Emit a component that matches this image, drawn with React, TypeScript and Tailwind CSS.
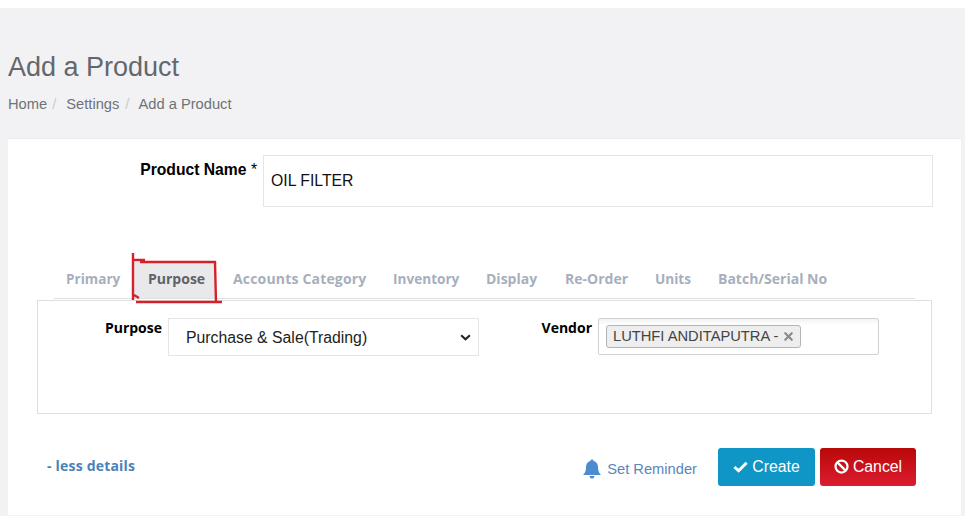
import { X } from 'lucide-react';

const arial = 'font-["Liberation_Sans",Arial,sans-serif]';
const tabFont = 'font-["Open_Sans",sans-serif]';

const tabs = [
  { name: 'Primary', cls: 'w-[76px] pl-[8px] text-[#a7afbd] text-[13.6px]' },
  { name: 'Purpose', cls: 'w-[81px] mr-[10px] pl-[14px] bg-[#e9e9eb] text-[#5f6266] text-[14px]' },
  { name: 'Accounts Category', cls: 'w-[160px] pl-[8px] text-[#a7afbd] text-[14px] tracking-[0.18px]' },
  { name: 'Inventory', cls: 'w-[93px] pl-[8px] text-[#a7afbd] text-[13.6px]' },
  { name: 'Display', cls: 'w-[79px] pl-[8px] text-[#a7afbd] text-[14px]' },
  { name: 'Re-Order', cls: 'w-[90px] pl-[8px] text-[#a7afbd] text-[14px]' },
  { name: 'Units', cls: 'w-[63px] pl-[8px] text-[#a7afbd] text-[13.6px]' },
  { name: 'Batch/Serial No', cls: 'pl-[8px] text-[#a7afbd] text-[14px]' },
];

function CheckIcon() {
  return (
    <svg viewBox="0 0 16 12" className="h-[12px] w-[15px]" fill="none" stroke="#fff" strokeWidth="3.2">
      <path d="M1.5 6 6 10 14.5 1.5" />
    </svg>
  );
}

function BanIcon() {
  return (
    <svg viewBox="0 0 16 16" className="h-[15px] w-[15px]" fill="none" stroke="#fff" strokeWidth="2.4">
      <circle cx="8" cy="8" r="6.4" />
      <path d="M3.6 3.6 12.4 12.4" />
    </svg>
  );
}

function BellIcon() {
  return (
    <svg viewBox="0 0 18 20" className="mr-[6px] h-[20px] w-[18px]" fill="#4b8dcf">
      <path d="M9 .5c1 0 1.6.7 1.6 1.6C13.5 2.8 15 5.2 15 8c0 4 1 6 3 8H0c2-2 3-4 3-8 0-2.8 1.5-5.2 4.4-5.9C7.4 1.2 8 .5 9 .5z" />
      <path d="M6.5 17h5c0 1.5-1.1 2.6-2.5 2.6S6.5 18.5 6.5 17z" />
    </svg>
  );
}

export default function App() {
  return (
    <div className={`h-[516px] w-[965px] overflow-hidden bg-white pt-2 ${arial}`}>
      <div className="h-[508px] bg-[#f2f2f4] pl-2 pr-1">
        <h1 className="pt-[42px] text-[27px] leading-[34px] text-[#64676c]">Add a Product</h1>
        <div className="mt-[11px] flex h-[18px] items-center text-[14.7px] text-[#6f7276]">
          <span>Home</span>
          <span className="ml-[5px] mr-[10px] text-[#c9cacc]">/</span>
          <span>Settings</span>
          <span className="ml-[6px] mr-[9px] text-[#c9cacc]">/</span>
          <span>Add a Product</span>
        </div>

        <div className="relative mt-[25px] h-[377px] border-t border-[#ebebee] bg-white">
          <div className="flex pt-[16px]">
            <label className="w-[255px] pt-[5px] pr-[6px] text-right text-[15.7px] leading-[20px] font-bold text-black">
              Product Name <span className="font-normal">*</span>
            </label>
            <div className="flex h-[52px] w-[670px] items-center border border-[#e5e5e7] pl-[7px] text-[15.8px] text-[#111]">
              OIL FILTER
            </div>
          </div>

          <div className="mt-[51px] ml-[46px] flex h-[41px] w-[861px] border-b border-[#dfe0e3] pl-[4px]">
            {tabs.map((t) => (
              <div
                key={t.name}
                className={`mt-[4px] h-[36px] pt-[7px] leading-[20px] font-bold whitespace-nowrap ${tabFont} ${t.cls}`}
              >
                {t.name}
              </div>
            ))}
          </div>

          <div className="mt-[1px] ml-[29px] flex h-[114px] w-[895px] border border-[#dfdfe2] pt-[17px]">
            <label className={`w-[130px] pr-[6px] text-right text-[14px] leading-[20px] font-bold text-black ${tabFont}`}>
              Purpose
            </label>
            <div className="relative flex h-[38px] w-[311px] items-center border border-[#e5e5e7] pt-[1px] pl-[17px] text-[15.8px] text-[#222]">
              Purchase &amp; Sale(Trading)
              <svg viewBox="0 0 12 8" className="absolute top-[15px] right-[7px] h-[7px] w-[11px]" fill="none" stroke="#222" strokeWidth="2.4">
                <path d="M1 1.5 6 6 11 1.5" />
              </svg>
            </div>
            <label className={`w-[119px] pr-[6px] text-right text-[14px] leading-[20px] font-bold text-black ${tabFont}`}>
              Vendor
            </label>
            <div className="flex h-[37px] w-[281px] items-start rounded-[2px] border border-[#cfd1d4] bg-[linear-gradient(#f3f3f3,#fff_18%)] pt-[6px] pl-[7px]">
              <div className="flex h-[23px] w-[195px] items-center rounded-[3px] border border-[#b4b4b4] bg-[#eeeeee] pl-[6px] text-[14.7px] whitespace-nowrap text-[#444]">
                LUTHFI ANDITAPUTRA -
                <X size={13} strokeWidth={4} className="ml-[4px] shrink-0 text-[#8a8a8a]" />
              </div>
            </div>
          </div>

          <div className="flex items-start pt-[34px]">
            <span className={`mt-[8px] ml-[39px] text-[14px] leading-[20px] font-bold tracking-[0.2px] text-[#4a82b8] ${tabFont}`}>- less details</span>
            <div className="mt-[10px] ml-[448px] flex items-center text-[14.7px] text-[#5b86bb]">
              <BellIcon />
              Set Reminder
            </div>
            <button className="ml-[21px] flex h-[38px] w-[97px] items-center justify-center gap-[4px] rounded-[3px] bg-[#0f96c6] pb-[1px] text-[15.8px] text-white">
              <CheckIcon />
              Create
            </button>
            <button className="ml-[5px] flex h-[38px] w-[96px] items-center justify-center gap-[4px] rounded-[3px] bg-[linear-gradient(#b90808,#dc1c30)] pb-[1px] text-[15.8px] text-white">
              <BanIcon />
              Cancel
            </button>
          </div>

          {/* hand-drawn red annotation round the Purpose tab */}
          <svg className="pointer-events-none absolute top-[114px] left-[122px] h-[52px] w-[94px]" viewBox="0 0 94 52" fill="none" stroke="#d4212a" strokeWidth="2.4">
            <path d="M3 0 3 47 M3 7 15 7 M10 9 85 9 86 50 M6 49 92 49 M4 42 9 45" />
          </svg>
        </div>
      </div>
    </div>
  );
}
